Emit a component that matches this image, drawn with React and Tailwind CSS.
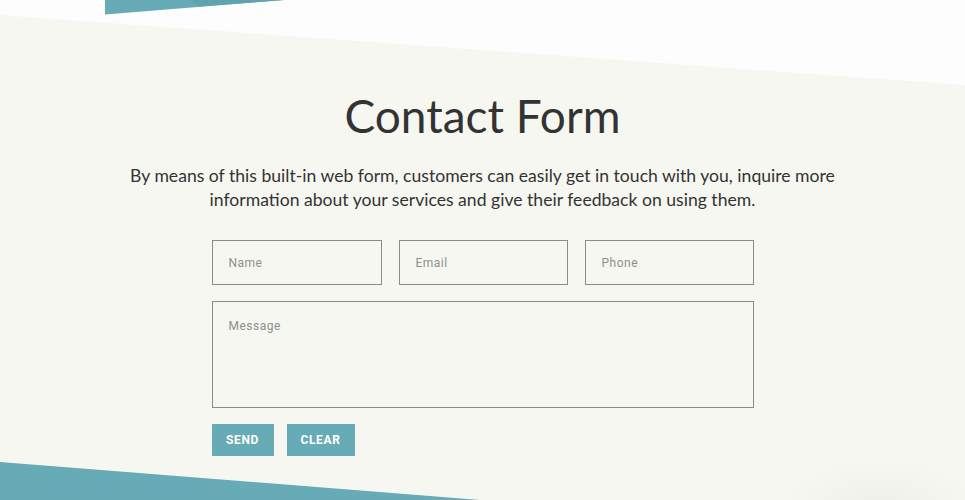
import React from "react";

const fields = ["Name", "Email", "Phone"];

const Backdrop = () => (
  <svg
    className="absolute inset-0 w-full h-full"
    viewBox="0 0 965 500"
    preserveAspectRatio="none"
  >
    {/* cream band with slanted top edge */}
    <polygon points="0,15 965,85 965,500 0,500" fill="#f7f7f2" />
    {/* teal strip peeking in at the top */}
    <polygon points="105,0 284,0 105,14.5" fill="#66abb5" />
    <polygon points="190,0 284,0 199,6.6" fill="#5ea3ae" />
    {/* teal wedge at the bottom */}
    <polygon points="0,462 480,500 0,500" fill="#66abb5" />
  </svg>
);

export default function App() {
  return (
    <div className="relative w-full h-[500px] overflow-hidden bg-[#fdfdfd] font-['Lato',sans-serif]">
      <Backdrop />
      {/* soft shadow blob in the lower right */}
      <div className="absolute left-[780px] top-[460px] w-[200px] h-[90px] rounded-full bg-[radial-gradient(ellipse_at_center,rgba(0,0,0,0.03),rgba(0,0,0,0)_70%)]" />

      <div className="relative flex flex-col items-center pt-[88px]">
        <h1 className="text-[46px] leading-[56px] text-[#333333] font-normal">
          Contact Form
        </h1>
        <p className="mt-[20px] w-[740px] text-center text-[17.6px] leading-[24px] text-[#333333]">
          By means of this built-in web form, customers can easily get in touch
          with you, inquire more information about your services and give their
          feedback on using them.
        </p>

        <form className="mt-[28px] w-[542px] font-['Roboto',sans-serif]">
          <div className="grid grid-cols-[170px_169px_169px] gap-[17px]">
            {fields.map((f) => (
              <input
                key={f}
                placeholder={f}
                className="h-[45px] border border-[#8b8d80] bg-transparent px-[16px] text-[12px] tracking-[0.5px] text-[#555] placeholder:text-[#8c9188] outline-none"
              />
            ))}
          </div>
          <textarea
            placeholder="Message"
            className="mt-[16px] block w-full h-[107px] resize-none border border-[#8b8d80] bg-transparent px-[16px] py-[15px] text-[12px] tracking-[0.5px] text-[#555] placeholder:text-[#8c9188] outline-none"
          />
          <div className="mt-[16px] flex gap-[13px]">
            <button
              type="button"
              className="h-[32px] w-[62px] bg-[#66abb5] text-white text-[12px] font-bold tracking-[0.6px] uppercase"
            >
              Send
            </button>
            <button
              type="button"
              className="h-[32px] w-[68px] bg-[#66abb5] text-white text-[12px] font-bold tracking-[0.6px] uppercase"
            >
              Clear
            </button>
          </div>
        </form>
      </div>
    </div>
  );
}
